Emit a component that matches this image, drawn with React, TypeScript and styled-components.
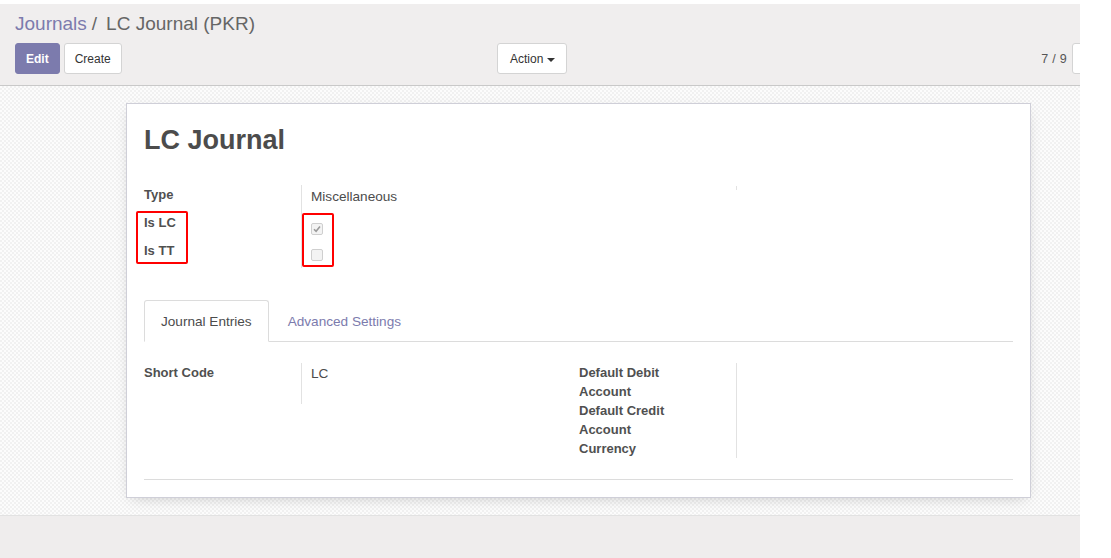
import React from "react";
import styled, { createGlobalStyle } from "styled-components";

const GlobalStyle = createGlobalStyle`
  html, body { margin: 0; padding: 0; background: #fff; }
  body { font-family: "Liberation Sans", Arial, sans-serif; color: #4c4c4c; }
`;

const Page = styled.div`
  width: 1080px;
  height: 558px;
  padding-top: 4px;
  box-sizing: border-box;
  display: flex;
  flex-direction: column;
  overflow: hidden;
`;

const ControlPanel = styled.div`
  background: #f0eeee;
  border-bottom: 1px solid #c9c9c9;
  height: 82px;
  box-sizing: border-box;
  padding: 8px 0 0 15px;
  display: flex;
  flex-direction: column;
  flex-shrink: 0;
`;

const Breadcrumb = styled.div`
  font-size: 19px;
  line-height: 23px;
  color: #666;
  display: flex;
`;

const Crumb = styled.span<{ $link?: boolean }>`
  color: ${(p) => (p.$link ? "#7c7bad" : "#666")};
`;

const Slash = styled.span`
  margin: 0 9px 0 5px;
  color: #666;
`;

const ButtonRow = styled.div`
  display: flex;
  align-items: center;
  margin-top: 8px;
  height: 31px;
`;

const Buttons = styled.div`
  display: flex;
  gap: 4px;
  width: 482px;
`;

const Btn = styled.button<{ $primary?: boolean }>`
  font-family: inherit;
  font-size: 12px;
  height: 31px;
  padding: 0 10px;
  border-radius: 3px;
  border: 1px solid ${(p) => (p.$primary ? "#7c7bad" : "#d4d4d4")};
  background: ${(p) => (p.$primary ? "#7c7bad" : "#fff")};
  color: ${(p) => (p.$primary ? "#fff" : "#333")};
  font-weight: ${(p) => (p.$primary ? 700 : 400)};
  display: flex;
  align-items: center;
  gap: 4px;
  cursor: pointer;
`;

const ActionBtn = styled(Btn)`
  padding: 0 11px 0 12px;
`;

const Caret = styled.span`
  width: 0;
  height: 0;
  border-left: 4px solid transparent;
  border-right: 4px solid transparent;
  border-top: 4px solid #333;
  margin-top: 2px;
`;

const Pager = styled.div`
  margin-left: auto;
  display: flex;
  align-items: center;
  gap: 5px;
  font-size: 12.5px;
  color: #555;
  letter-spacing: 0.3px;
`;

const PagerBtn = styled.div`
  width: 30px;
  height: 29px;
  border: 1px solid #d4d4d4;
  border-radius: 3px 0 0 3px;
  background: #fff;
  margin-right: -24px;
`;

const Content = styled.div`
  flex: 1;
  background-color: #fbfbfb;
  background-image: repeating-conic-gradient(#f1f1f1 0 25%, #fcfcfc 0 50%);
  background-size: 4px 4px;
  padding: 17px 0 0 126px;
  box-sizing: border-box;
`;

const Sheet = styled.div`
  position: relative;
  width: 905px;
  height: 395px;
  box-sizing: border-box;
  background: #fff;
  border: 1px solid #cfcfd8;
  box-shadow: 0 4px 14px -6px rgba(0, 0, 0, 0.25);
  padding: 20px 17px 0 17px;
`;

const Title = styled.h1`
  margin: 0;
  font-size: 27px;
  line-height: 32px;
  font-weight: 700;
  color: #4c4c4c;
`;

const GroupPair = styled.div`
  display: grid;
  grid-template-columns: 435px 435px;
  margin-top: 29px;
`;

const Group = styled.div`
  display: grid;
  grid-template-columns: 157px 1fr;
  align-content: start;
`;

const LabelCol = styled.div<{ $lh?: number }>`
  font-size: 13px;
  font-weight: 700;
  line-height: ${(p) => p.$lh ?? 20}px;
  color: #505050;
  display: flex;
  flex-direction: column;
`;

const LabelRow = styled.div<{ $h?: number }>`
  height: ${(p) => (p.$h ? p.$h + "px" : "auto")};
  width: 120px;
`;

const ValueCol = styled.div<{ $minH?: number }>`
  border-left: 1px solid #e2e2e2;
  padding-left: 9px;
  font-size: 13.6px;
  line-height: 20px;
  color: #4c4c4c;
  min-height: ${(p) => p.$minH ?? 0}px;
  display: flex;
  flex-direction: column;
`;

const ValueRow = styled.div<{ $h: number; $pt?: number }>`
  height: ${(p) => p.$h}px;
  padding-top: ${(p) => p.$pt ?? 0}px;
  box-sizing: border-box;
`;

const Tick = styled.div`
  margin-top: 1px;
  margin-left: 157px;
  width: 1px;
  height: 4px;
  background: #e2e2e2;
`;

const CheckBox = styled.span`
  display: inline-flex;
  align-items: center;
  justify-content: center;
  width: 12px;
  height: 12px;
  border: 1px solid #cfcfcf;
  border-radius: 2px;
  background: #f3f3f3;
  box-sizing: border-box;
`;

const Annotation = styled.div<{ $x: number; $y: number; $w: number; $h: number }>`
  position: absolute;
  left: ${(p) => p.$x}px;
  top: ${(p) => p.$y}px;
  width: ${(p) => p.$w}px;
  height: ${(p) => p.$h}px;
  border: 2px solid #ff0000;
  border-radius: 2px;
  box-sizing: border-box;
  pointer-events: none;
`;

const Tabs = styled.div`
  margin-top: 32px;
  display: flex;
  align-items: flex-start;
  border-bottom: 1px solid #dcdcdc;
  height: 42px;
  box-sizing: border-box;
`;

const Tab = styled.div<{ $active?: boolean }>`
  padding: 0 16px;
  height: 42px;
  box-sizing: border-box;
  display: flex;
  align-items: center;
  font-size: 13.6px;
  color: ${(p) => (p.$active ? "#4c4c4c" : "#7c7bad")};
  border: 1px solid ${(p) => (p.$active ? "#dcdcdc" : "transparent")};
  border-bottom-color: ${(p) => (p.$active ? "#fff" : "transparent")};
  border-radius: 3px 3px 0 0;
  background: ${(p) => (p.$active ? "#fff" : "transparent")};
  margin-right: 2px;
`;

const TabBody = styled.div`
  padding-top: 21px;
  padding-bottom: 21px;
  border-bottom: 1px solid #dcdcdc;
  display: grid;
  grid-template-columns: 435px 435px;
`;

const Footer = styled.div`
  height: 42px;
  flex-shrink: 0;
  background: #efeded;
  border-top: 1px solid #e2e2e2;
`;

export default function App() {
  return (
    <>
      <GlobalStyle />
      <Page>
        <ControlPanel>
          <Breadcrumb>
            <Crumb $link>Journals</Crumb>
            <Slash>/</Slash>
            <Crumb>LC Journal (PKR)</Crumb>
          </Breadcrumb>
          <ButtonRow>
            <Buttons>
              <Btn $primary>Edit</Btn>
              <Btn>Create</Btn>
            </Buttons>
            <ActionBtn>
              Action <Caret />
            </ActionBtn>
            <Pager>
              <span>7 / 9</span>
              <PagerBtn />
            </Pager>
          </ButtonRow>
        </ControlPanel>
        <Content>
          <Sheet>
            <Title>LC Journal</Title>
            <GroupPair>
              <Group>
                <LabelCol>
                  <LabelRow $h={28}>Type</LabelRow>
                  <LabelRow $h={28}>Is LC</LabelRow>
                  <LabelRow $h={27}>Is TT</LabelRow>
                </LabelCol>
                <ValueCol>
                  <ValueRow $h={28} $pt={2}>Miscellaneous</ValueRow>
                  <ValueRow $h={28} $pt={6}>
                    <CheckBox>
                      <svg width="8" height="8" viewBox="0 0 8 8">
                        <path d="M1 4.2 L3.1 6.3 L7 1.6" fill="none" stroke="#9a9a9a" strokeWidth="1.6" />
                      </svg>
                    </CheckBox>
                  </ValueRow>
                  <ValueRow $h={27} $pt={6}>
                    <CheckBox />
                  </ValueRow>
                </ValueCol>
              </Group>
              <Tick />
            </GroupPair>
            <Tabs>
              <Tab $active>Journal Entries</Tab>
              <Tab>Advanced Settings</Tab>
            </Tabs>
            <TabBody>
              <Group>
                <LabelCol>
                  <LabelRow>Short Code</LabelRow>
                </LabelCol>
                <ValueCol $minH={41}>
                  <ValueRow $h={20} $pt={1}>LC</ValueRow>
                </ValueCol>
              </Group>
              <Group>
                <LabelCol $lh={19}>
                  <LabelRow>Default Debit Account</LabelRow>
                  <LabelRow>Default Credit Account</LabelRow>
                  <LabelRow>Currency</LabelRow>
                </LabelCol>
                <ValueCol />
              </Group>
            </TabBody>
            <Annotation $x={9} $y={107} $w={52} $h={53} />
            <Annotation $x={175} $y={109} $w={32} $h={54} />
          </Sheet>
        </Content>
        <Footer />
      </Page>
    </>
  );
}
